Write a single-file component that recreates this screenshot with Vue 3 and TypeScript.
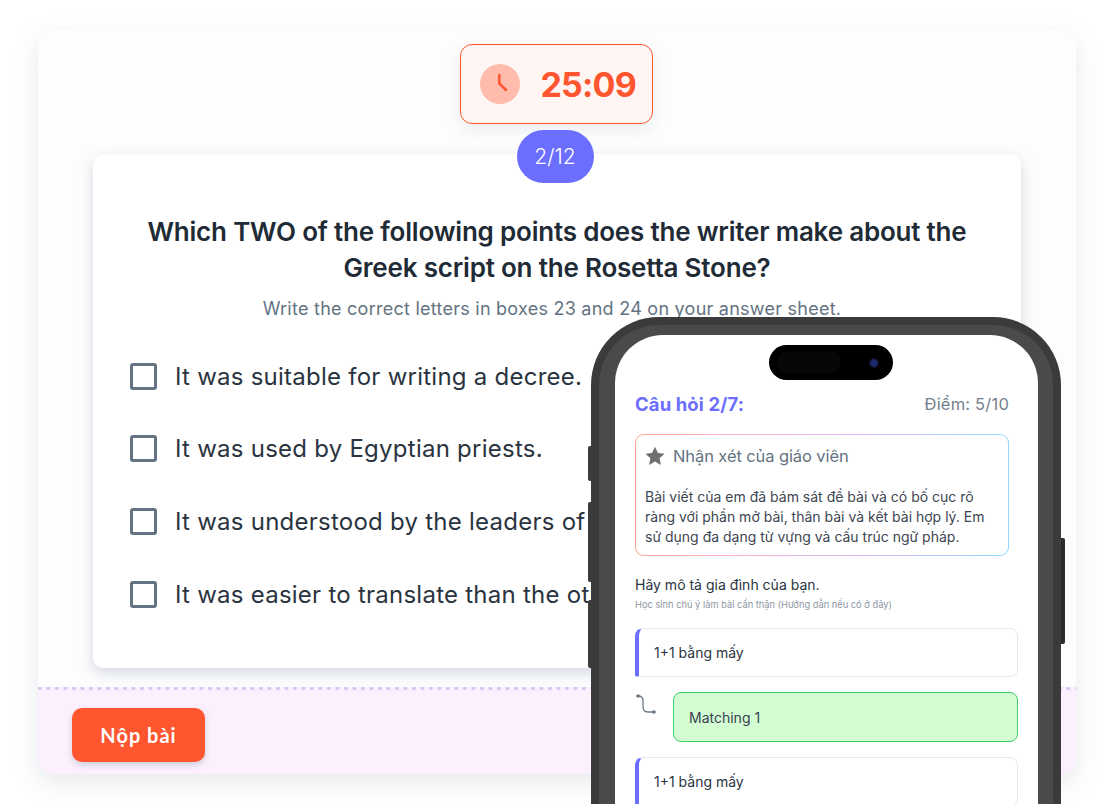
<script setup lang="ts">
const choices = [
  'It was suitable for writing a decree.',
  'It was used by Egyptian priests.',
  'It was understood by the leaders of Egypt at the time.',
  'It was easier to translate than the other scripts.',
]
</script>

<template>
  <div class="page">
    <main class="exam">
      <div class="exam-body">
        <div class="timer">
          <span class="timer-icon">
            <svg width="40" height="40" viewBox="0 0 40 40">
              <path d="M19.300 11v8.300l6.700 6.700" fill="none" stroke="#ff5630" stroke-width="2.500" stroke-linecap="round" stroke-linejoin="round" />
            </svg>
          </span>
          <span class="timer-value">25:09</span>
        </div>
        <div class="counter">2/12</div>
        <section class="question">
          <h1>Which TWO of the following points does the writer make about the Greek script on the Rosetta Stone?</h1>
          <p class="hint">Write the correct letters in boxes 23 and 24 on your answer sheet.</p>
          <label v-for="c in choices" :key="c" class="choice">
            <span class="box"></span>
            <span class="choice-text">{{ c }}</span>
          </label>
        </section>
      </div>
      <footer class="exam-footer">
        <button class="submit">Nộp bài</button>
      </footer>
    </main>

    <div class="phone">
      <span class="side-btn l1"></span>
      <span class="side-btn l2"></span>
      <span class="side-btn l3"></span>
      <span class="side-btn r1"></span>
      <div class="bezel">
        <div class="screen">
          <div class="island">
            <span class="island-dim"></span>
            <span class="lens"></span>
          </div>
          <div class="screen-head">
            <span class="q-no">Câu hỏi 2/7:</span>
            <span class="score">Điểm: 5/10</span>
          </div>
          <div class="feedback">
            <div class="feedback-title">
              <svg width="20" height="20" viewBox="0 0 20 20">
                <path d="M10 0.800l2.900 6.100 6.600 0.800-4.900 4.600 1.300 6.600L10 15.600l-5.900 3.300 1.300-6.600L0.500 7.700l6.600-0.800z" fill="#6f6f6f" />
              </svg>
              <span>Nhận xét của giáo viên</span>
            </div>
            <p>Bài viết của em đã bám sát đề bài và có bố cục rõ ràng với phần mở bài, thân bài và kết bài hợp lý. Em sử dụng đa dạng từ vựng và cấu trúc ngữ pháp.</p>
          </div>
          <div class="prompt">Hãy mô tả gia đình của bạn.</div>
          <div class="prompt-sub">Học sinh chú ý làm bài cẩn thận (Hướng dẫn nếu có ở đây)</div>
          <div class="option">1+1 bằng mấy</div>
          <div class="match-row">
            <svg width="24" height="24" viewBox="0 0 24 24">
              <circle cx="3" cy="3" r="1.800" fill="#6b7785" />
              <circle cx="19" cy="19" r="1.800" fill="#6b7785" />
              <path d="M3 3c3 0 5 1 5 5v6c0 3 2 5 5 5h6" fill="none" stroke="#6b7785" stroke-width="1.300" />
            </svg>
            <div class="match">Matching 1</div>
          </div>
          <div class="option">1+1 bằng mấy</div>
        </div>
      </div>
    </div>
  </div>
</template>

<style>
html, body { margin: 0; background: #fff; }
</style>

<style scoped>
.page {
  position: relative;
  width: 1118px;
  height: 804px;
  overflow: hidden;
  padding: 30px 42px 30px 38px;
  box-sizing: border-box;
  font-family: Inter, "Noto Sans", sans-serif;
  color: #212b36;
}

.exam {
  height: 744px;
  display: flex;
  flex-direction: column;
  background: #fff;
  border-radius: 16px;
  box-shadow: 0 8px 24px rgba(145, 158, 171, 0.24);
  overflow: hidden;
}

.exam-body {
  flex: 1;
  display: flex;
  flex-direction: column;
  align-items: center;
  padding-top: 14px;
  background: #fdfdfe;
}

.timer {
  width: 193px;
  height: 80px;
  margin-left: -2px;
  box-sizing: border-box;
  display: flex;
  align-items: center;
  gap: 21px;
  padding-left: 19px;
  background: #fff5f3;
  border: 1.500px solid #ff5630;
  border-radius: 12px;
  box-shadow: 0 6px 16px rgba(145, 158, 171, 0.16);
}

.timer-icon {
  width: 40px;
  height: 40px;
  border-radius: 50%;
  background: #ffbbab;
}

.timer-value {
  font-size: 34px;
  font-weight: 700;
  letter-spacing: -0.8px;
  color: #ff5630;
}

.counter {
  position: relative;
  z-index: 1;
  width: 77px;
  height: 53px;
  margin-top: 6px;
  margin-left: -4px;
  margin-bottom: -29px;
  display: flex;
  align-items: center;
  justify-content: center;
  background: #6b6eff;
  border-radius: 27px;
  color: #fff;
  font-size: 21px;
  font-weight: 300;
}

.question {
  width: 928px;
  height: 514px;
  box-sizing: border-box;
  padding: 60px 37px 0;
  background: #fff;
  border-radius: 10px;
  box-shadow: 0 5px 14px rgba(145, 158, 171, 0.38);
}

.question h1 {
  margin: 0;
  font-size: 26px;
  line-height: 36px;
  font-weight: 600;
  letter-spacing: -0.2px;
  text-align: center;
  color: #212b36;
}

.hint {
  margin: 10px 0 36px;
  padding-right: 10px;
  font-size: 18px;
  line-height: 26px;
  text-align: center;
  color: #637381;
  letter-spacing: 0.25px;
}

.choice {
  display: flex;
  align-items: center;
  gap: 18px;
  height: 72.600px;
  margin-top: -18px;
  margin-bottom: 18px;
}

.box {
  width: 27px;
  height: 27px;
  box-sizing: border-box;
  border: 3px solid #637381;
  border-radius: 3px;
}

.choice-text {
  max-width: 416px;
  overflow: hidden;
  font-size: 24px;
  letter-spacing: 0.25px;
  white-space: nowrap;
  color: #2a3440;
}

.exam-footer {
  height: 87px;
  box-sizing: border-box;
  padding: 21px 34px 0;
  background:
    linear-gradient(90deg, #d6c8ef 4px, transparent 4px) 0 0 / 8.500px 3px repeat-x,
    #fcf0fe;
}

.submit {
  width: 133px;
  height: 54px;
  display: block;
  border: 0;
  border-radius: 10px;
  background: #ff5630;
  color: #fff;
  font-family: Lato, sans-serif;
  font-size: 20px;
  font-weight: 700;
  letter-spacing: 1px;
  box-shadow: 0 3px 6px rgba(145, 158, 171, 0.4);
}

.phone {
  position: absolute;
  left: 591px;
  top: 317px;
  width: 470px;
  height: 560px;
  box-sizing: border-box;
  padding: 8px;
  background: #3b3b3b;
  border-radius: 68px;
}

.side-btn {
  position: absolute;
  width: 4px;
  background: #3b3b3b;
}

.l1 { left: -3px; top: 129px; height: 35px; border-radius: 2px 0 0 2px; }
.l2 { left: -3px; top: 185px; height: 80px; border-radius: 2px 0 0 2px; }
.l3 { left: -3px; top: 283px; height: 68px; border-radius: 2px 0 0 2px; }
.r1 { right: -4px; top: 221px; height: 106px; background: #2b2b2b; border-radius: 0 2px 2px 0; }

.bezel {
  height: 100%;
  box-sizing: border-box;
  padding: 10px 15px 0 16px;
  background: #4a4a4a;
  border-radius: 60px;
}

.screen {
  height: 100%;
  box-sizing: border-box;
  padding: 10px 20px 0;
  background: #fff;
  border-radius: 48px;
}

.island {
  width: 124px;
  height: 35px;
  margin: 0 auto;
  transform: translateX(4px);
  display: flex;
  align-items: center;
  justify-content: space-between;
  padding: 0 8px;
  box-sizing: border-box;
  background: #000;
  border-radius: 18px;
}

.island-dim {
  width: 64px;
  height: 21px;
  border-radius: 11px;
  background: #070707;
}

.lens {
  width: 10px;
  height: 10px;
  margin-right: 6px;
  border-radius: 50%;
  background: radial-gradient(circle, #1d2a6b 0 35%, #0a0c20 70%);
}

.screen-head {
  width: 374px;
  margin-top: 12px;
  display: flex;
  align-items: center;
  justify-content: space-between;
  height: 24px;
}

.q-no {
  font-size: 18.500px;
  font-weight: 700;
  letter-spacing: 0.1px;
  color: #6b6eff;
}

.score {
  font-size: 16.500px;
  letter-spacing: 0.2px;
  color: #74808d;
}

.feedback {
  width: 374px;
  height: 122px;
  box-sizing: border-box;
  margin-top: 18px;
  padding: 9px 9px 0;
  border: 1px solid transparent;
  border-radius: 9px;
  background:
    linear-gradient(#fff, #fff) padding-box,
    linear-gradient(90deg, #ffa48c, #ffb6d2 30%, #d9b6fb 60%, #8fdcff) border-box;
}

.feedback-title {
  display: flex;
  align-items: center;
  gap: 8px;
  height: 24px;
  font-size: 16.500px;
  color: #637381;
  letter-spacing: -0.1px;
}

.feedback p {
  margin: 19px 0 0;
  font-size: 14px;
  line-height: 20px;
  color: #3d4652;
}

.prompt {
  margin-top: 19px;
  font-size: 14px;
  line-height: 20px;
  color: #2a3440;
}

.prompt-sub {
  margin-top: 3px;
  margin-bottom: 17px;
  font-size: 9.300px;
  line-height: 13px;
  color: #8e98a4;
}

.option {
  height: 49px;
  box-sizing: border-box;
  display: flex;
  align-items: center;
  padding-left: 15px;
  border: 1px solid #e6e8eb;
  border-left: 4px solid #6b6eff;
  border-radius: 8px 8px 8px 2px;
  font-size: 14px;
  color: #2a3440;
}

.match-row {
  display: flex;
  justify-content: space-between;
  margin: 15px 0;
}

.match-row svg { margin-top: 1px; }

.match {
  width: 345px;
  height: 50px;
  box-sizing: border-box;
  display: flex;
  align-items: center;
  padding-left: 15px;
  background: #d3fcd2;
  border: 1px solid #3fcf6a;
  border-radius: 8px;
  font-size: 14px;
  color: #3a4450;
}
</style>
